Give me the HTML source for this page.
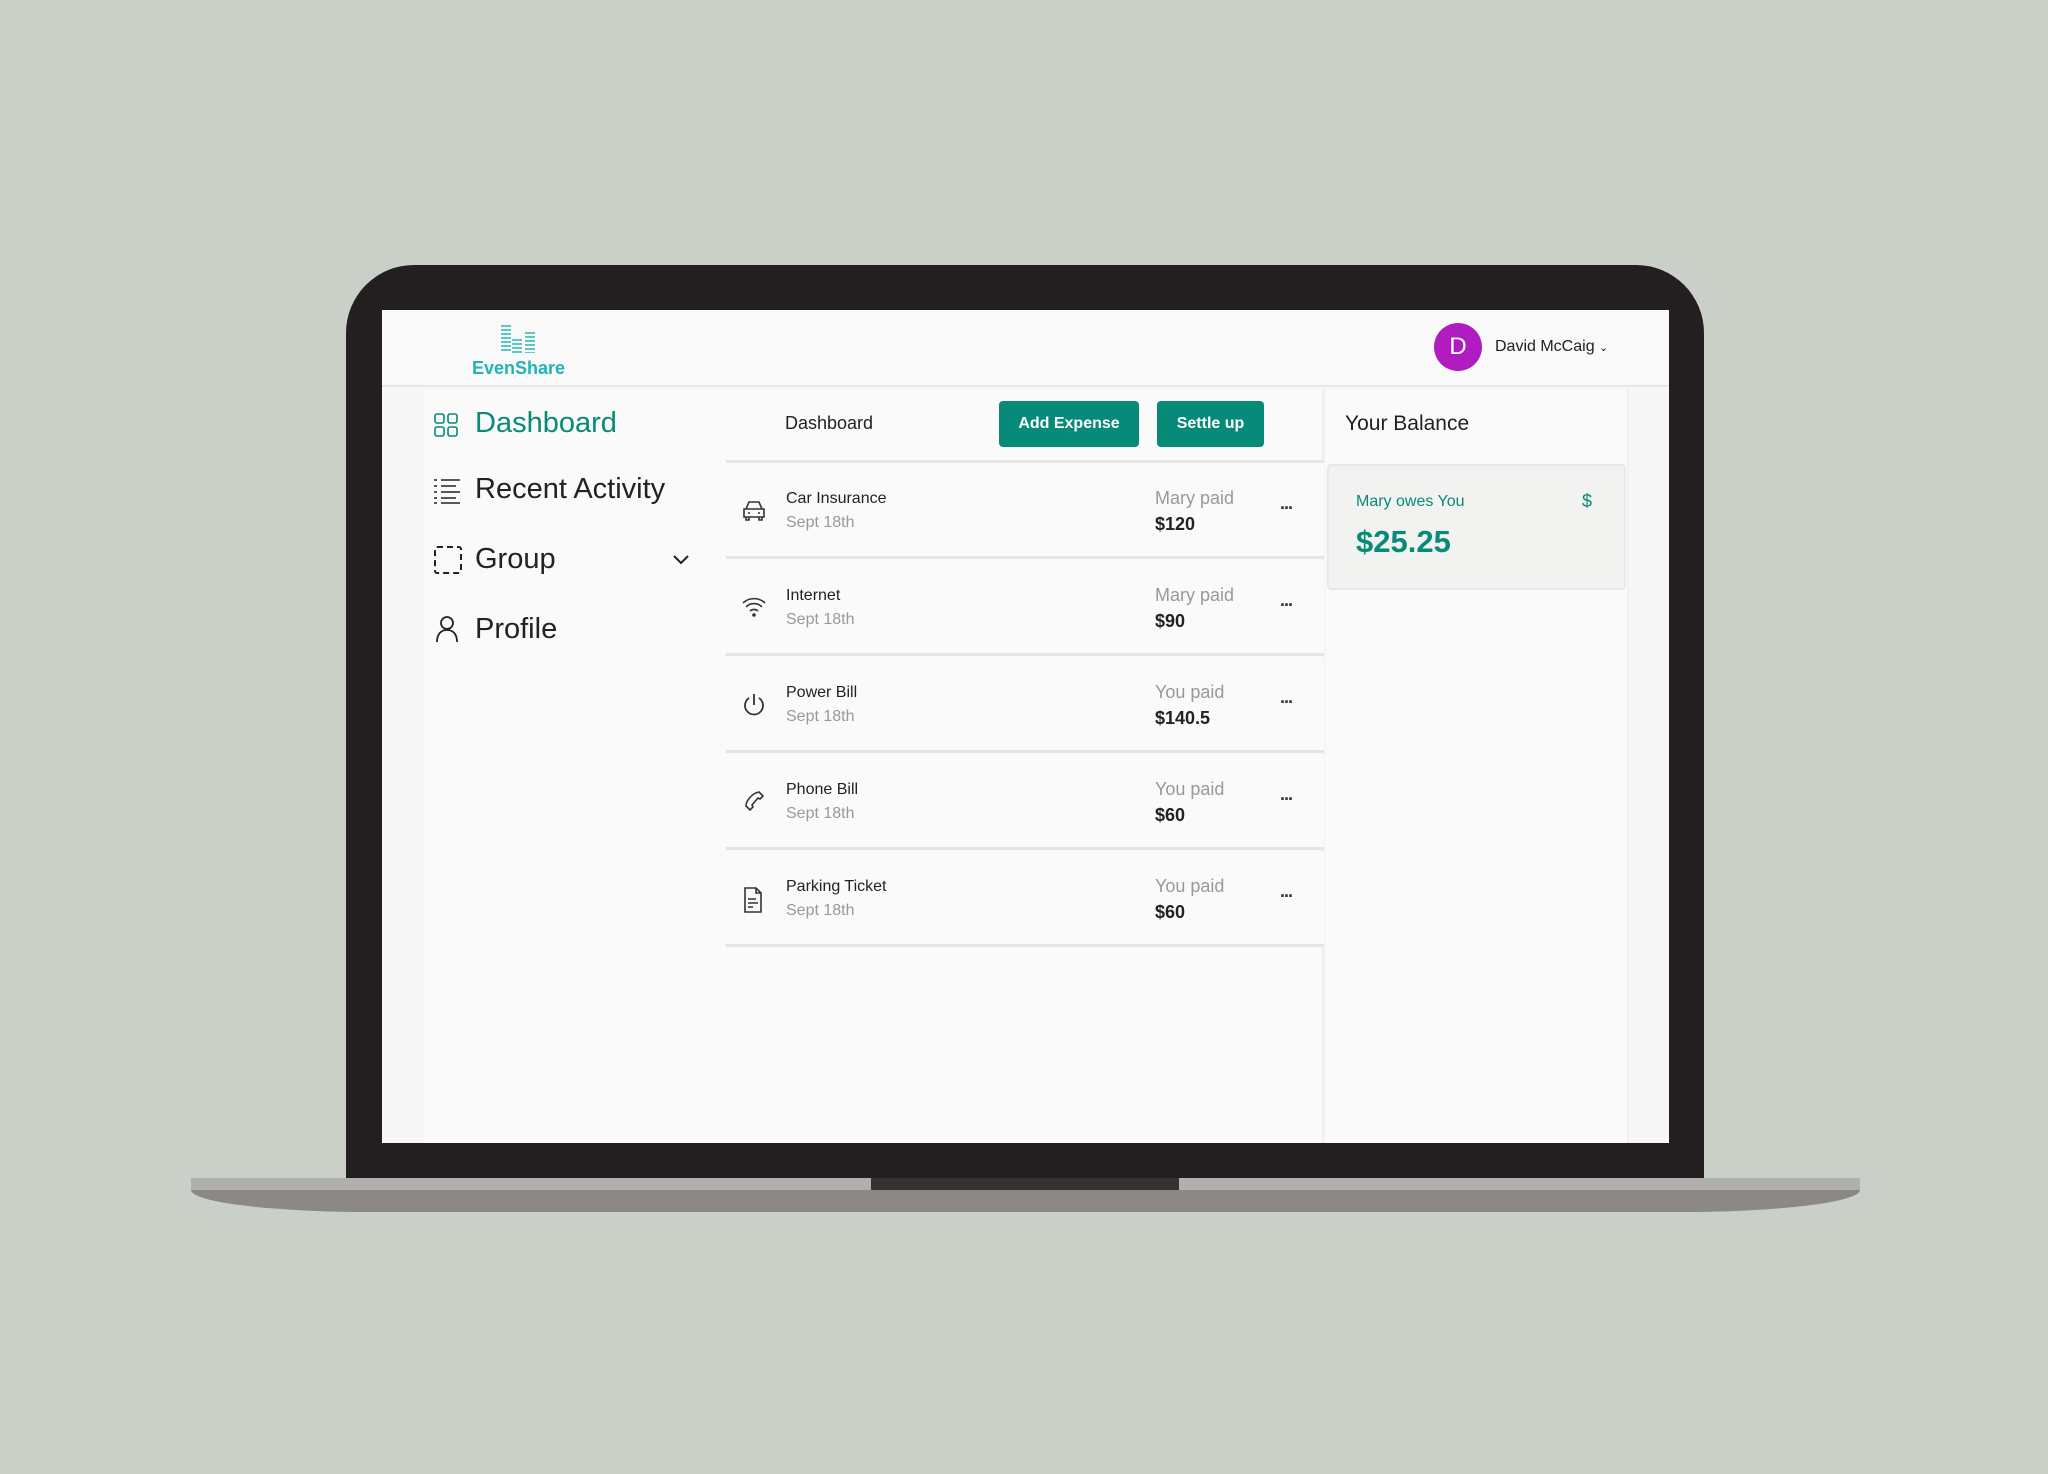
<!DOCTYPE html>
<html><head><meta charset="utf-8"><style>
*{margin:0;padding:0;box-sizing:border-box}
body{width:2048px;height:1474px;background:#cacfc8;position:relative;overflow:hidden;font-family:"Liberation Sans",sans-serif;}
.a{position:absolute}
.lid{left:346px;top:265px;width:1358px;height:914px;background:#231f20;border-radius:68px 68px 0 0}
.screen{left:382px;top:310px;width:1287px;height:833px;background:#f7f7f7;overflow:hidden}
.t{position:absolute;white-space:nowrap}
.row{position:absolute;left:344px;width:598px;height:96px;border-bottom:3px solid #e4e4e8;background:#fafafa}
.ti{left:60px;top:27px;font-size:16px;color:#222}
.dt{left:60px;top:51px;font-size:16px;color:#999}
.pd{left:429px;top:25px;font-size:18px;color:#999}
.am{left:429px;top:51px;font-size:18px;color:#222;font-weight:bold}
.dots{left:554px;top:30px;font-size:18px;color:#333;font-weight:bold;letter-spacing:-1px}
.ic{position:absolute;left:16px;top:37px}
</style></head><body>
<div class="a lid"></div>
<div class="a" style="left:191px;top:1178px;width:1669px;height:12px;background:#b0b0ae"></div>
<div class="a" style="left:871px;top:1178px;width:308px;height:12px;background:#333"></div>
<div class="a" style="left:191px;top:1190px;width:1669px;height:22px;background:#8b8886;border-radius:0 0 180px 180px/0 0 22px 22px"></div>
<div class="a screen">
 <div class="a" style="left:0;top:0;width:1287px;height:77px;background:#f9f9f9;border-bottom:2px solid #e6e6e6"></div>
 <div class="a" style="left:119px;top:15px;width:10px;height:28px;background:repeating-linear-gradient(#5cc7c7 0 2px,transparent 2px 4px)"></div>
 <div class="a" style="left:130px;top:29px;width:10px;height:14px;background:repeating-linear-gradient(#5cc7c7 0 2px,transparent 2px 4px)"></div>
 <div class="a" style="left:143px;top:22px;width:10px;height:21px;background:repeating-linear-gradient(#5cc7c7 0 2px,transparent 2px 4px)"></div>
 <div class="t" style="left:90px;top:48px;font-size:18px;font-weight:bold;color:#1fb5b5">EvenShare</div>
 <div class="a" style="left:1052px;top:13px;width:48px;height:48px;border-radius:50%;background:#b01cc0;color:#fff;font-size:24px;text-align:center;line-height:48px">D</div>
 <div class="t" style="left:1113px;top:28px;font-size:16px;color:#222">David McCaig <span style="font-size:11px">&#8964;</span></div>
 <div class="a" style="left:42px;top:79px;width:302px;height:760px;background:#fafafa;box-shadow:1px 0 3px rgba(0,0,0,.05)"></div>
 <svg class="a" style="left:52px;top:103px" width="24" height="24" fill="none" stroke="#078a78" stroke-width="1.6"><rect x="1" y="1" width="9" height="9" rx="2"/><rect x="14" y="1" width="9" height="9" rx="2"/><rect x="1" y="14" width="9" height="9" rx="2"/><rect x="14" y="14" width="9" height="9" rx="2"/></svg>
 <div class="t" style="left:93px;top:97px;font-size:29px;color:#078a78">Dashboard</div>
 <svg class="a" style="left:51px;top:168px" width="28" height="26" stroke="#222" stroke-width="1.6"><path d="M1 2h3M8 2h19M1 8h3M8 8h15M1 14h3M8 14h19M1 20h3M8 20h15M1 25h3M8 25h19"/></svg>
 <div class="t" style="left:93px;top:163px;font-size:29px;color:#222">Recent Activity</div>
 <svg class="a" style="left:52px;top:236px" width="28" height="28" fill="none" stroke="#222" stroke-width="2" stroke-dasharray="6 4"><rect x="1" y="1" width="26" height="26" rx="2"/></svg>
 <div class="t" style="left:93px;top:233px;font-size:29px;color:#222">Group</div>
 <svg class="a" style="left:290px;top:244px" width="18" height="12" fill="none" stroke="#222" stroke-width="2"><path d="M2 2l7 7 7-7"/></svg>
 <svg class="a" style="left:53px;top:305px" width="24" height="28" fill="none" stroke="#222" stroke-width="1.8"><circle cx="12" cy="8" r="6"/><path d="M2 27c0-8 4-12 10-12s10 4 10 12"/></svg>
 <div class="t" style="left:93px;top:303px;font-size:29px;color:#222">Profile</div>
 <div class="a" style="left:344px;top:79px;width:598px;height:760px;background:#fafafa;border-right:2px solid #eee"></div>
 <div class="a" style="left:344px;top:150px;width:598px;height:3px;background:#e4e4e8"></div>
 <div class="t" style="left:403px;top:103px;font-size:18px;color:#222">Dashboard</div>
 <div class="a" style="left:617px;top:91px;width:140px;height:46px;background:#078a78;border-radius:4px;color:#fff;font-size:16px;font-weight:bold;text-align:center;line-height:46px">Add Expense</div>
 <div class="a" style="left:775px;top:91px;width:107px;height:46px;background:#078a78;border-radius:4px;color:#fff;font-size:16px;font-weight:bold;text-align:center;line-height:46px">Settle up</div>

 <div class="row" style="top:153px"><svg class="ic" width="24" height="22" fill="none" stroke="#333" stroke-width="1.6"><path d="M4 9l3-7h10l3 7M2 9h20v8H2zM4 17v3h3v-3M17 17v3h3v-3M6 13h2M16 13h2"/></svg><div class="t ti">Car Insurance</div><div class="t dt">Sept 18th</div><div class="t pd">Mary paid</div><div class="t am">$120</div><div class="t dots">...</div></div>
 <div class="row" style="top:250px"><svg class="ic" width="24" height="20" fill="none" stroke="#333" stroke-width="1.6"><path d="M1 6a16 16 0 0 1 22 0M4 10a11 11 0 0 1 16 0M8 14a6 6 0 0 1 8 0"/><circle cx="12" cy="18" r="1" fill="#333"/></svg><div class="t ti">Internet</div><div class="t dt">Sept 18th</div><div class="t pd">Mary paid</div><div class="t am">$90</div><div class="t dots">...</div></div>
 <div class="row" style="top:347px"><svg class="ic" style="top:35px" width="24" height="26" fill="none" stroke="#333" stroke-width="1.8"><path d="M12 2v11M7 6a9 9 0 1 0 10 0"/></svg><div class="t ti">Power Bill</div><div class="t dt">Sept 18th</div><div class="t pd">You paid</div><div class="t am">$140.5</div><div class="t dots">...</div></div>
 <div class="row" style="top:444px"><svg class="ic" style="top:36px" width="24" height="24" fill="none" stroke="#333" stroke-width="1.6"><path d="M17 2l4 4-3 3-2-1-6 7 1 2-3 3-4-4c0-6 7-13 13-14z"/></svg><div class="t ti">Phone Bill</div><div class="t dt">Sept 18th</div><div class="t pd">You paid</div><div class="t am">$60</div><div class="t dots">...</div></div>
 <div class="row" style="top:541px"><svg class="ic" style="top:36px" width="22" height="26" fill="none" stroke="#333" stroke-width="1.6"><path d="M3 1h11l5 5v19H3zM14 1v5h5M6 12h8M6 16h10M6 20h5"/></svg><div class="t ti">Parking Ticket</div><div class="t dt">Sept 18th</div><div class="t pd">You paid</div><div class="t am">$60</div><div class="t dots">...</div></div>
 <div class="a" style="left:944px;top:79px;width:301px;height:760px;background:#fafafa;box-shadow:1px 0 3px rgba(0,0,0,.05)"></div>
 <div class="t" style="left:963px;top:102px;font-size:21px;color:#222">Your Balance</div>
 <div class="a" style="left:945px;top:154px;width:299px;height:126px;background:#f2f2f0;border:2px solid #e8e8ec;border-radius:4px"></div>
 <div class="t" style="left:974px;top:183px;font-size:16px;color:#078a78">Mary owes You</div>
 <div class="t" style="left:1200px;top:181px;font-size:18px;color:#078a78">$</div>
 <div class="t" style="left:974px;top:214px;font-size:31px;font-weight:bold;color:#078a78">$25.25</div>
</div>
</body></html>
